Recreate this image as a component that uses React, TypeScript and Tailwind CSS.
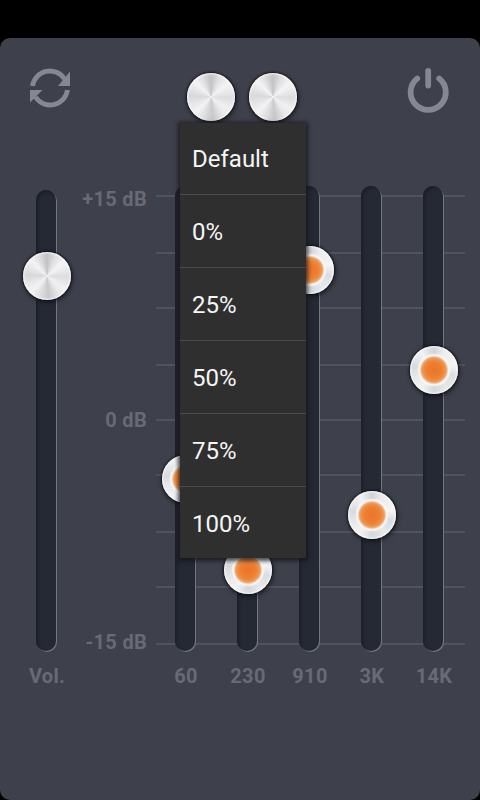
import { useState } from 'react';

const bands = [
  { label: '60', y: 293 },
  { label: '230', y: 384 },
  { label: '910', y: 84 },
  { label: '3K', y: 329 },
  { label: '14K', y: 184 },
];

const presets = ['Default', '0%', '25%', '50%', '75%', '100%'];

// distance of each grid line from the top of the tracks
const gridLines = [9, 66, 121, 178, 233, 288, 345, 400, 457];

function Knob({ lit = false }: { lit?: boolean }) {
  return (
    <div
      className={
        'flex size-12 shrink-0 items-center justify-center rounded-full shadow-[0_0_2px_1px_rgba(12,13,20,0.75),1px_2px_4px_1px_rgba(12,13,20,0.5),inset_0_0_2px_1px_rgba(255,255,255,0.8)] ' +
        (lit
          ? 'bg-[conic-gradient(#d0d2d5,#ececee_28deg,#f4f4f5_75deg,#dadde0_105deg,#e6e8ea_145deg,#d4d8dc_180deg,#f2f2f3_215deg,#e6e8ea_250deg,#d8dadd_280deg,#f2f2f3_325deg,#d0d2d5)]'
          : 'bg-[conic-gradient(#c2c1c4,#dedee0_22deg,#f4f4f5_50deg,#e9e9eb_72deg,#dddcdf_92deg,#f0f0f1_125deg,#e9e9eb_145deg,#c8c7ca_175deg,#dcdbde_197deg,#f3f3f4_225deg,#e6e6e8_250deg,#d8d7db_274deg,#f3f3f4_315deg,#e0e0e2_335deg,#c2c1c4)]')
      }
    >
      {lit && (
        <div className="size-[34px] rounded-full bg-[radial-gradient(circle_closest-side,#ea742c_0%,#ee7f32_45%,#f09245_66%,#eab288_76%,#f3ebe5_83%,#f8f8f8_88%,rgba(255,255,255,0)_100%)]" />
      )}
    </div>
  );
}

function Track({ y, height, lit }: { y: number; height: string; lit?: boolean }) {
  return (
    <div
      className={
        'relative w-5 rounded-full bg-[#252933] shadow-[1px_1px_0_#747680,inset_2px_2px_3px_#1c1f28] ' + height
      }
    >
      <div className="absolute -left-[13px] -mt-6" style={{ top: y }}>
        <Knob lit={lit} />
      </div>
    </div>
  );
}

export default function App() {
  const [selected, setSelected] = useState('Default');

  return (
    <main className="h-[800px] w-[480px] overflow-hidden bg-black pt-[38px] font-['Roboto',sans-serif]">
      <div className="h-[762px] rounded-[10px] bg-[#3e404b]">
        <header className="flex h-[148px] items-start justify-between pr-[30px] pl-[28px]">
          <button type="button" aria-label="Reset" className="mt-[28px]">
            <svg width="44" height="44" viewBox="0 0 44 44" fill="none">
              <path d="M4.5 20A17.5 17.5 0 0 1 36.5 13" stroke="#858791" strokeWidth="4.8" />
              <path d="M42 5.5V20H30Z" fill="#858791" />
              <path d="M39.5 24A17.5 17.5 0 0 1 7.500 31" stroke="#858791" strokeWidth="4.8" />
              <path d="M2 24H14.500L2 36.500Z" fill="#858791" />
            </svg>
          </button>

          <div className="relative mt-[35px] ml-[6px] flex gap-[14px]">
            <Knob />
            <Knob />
            <ul className="absolute top-[50px] left-[-7px] z-10 w-[126px] bg-[#2f2f2f] shadow-[0_1px_4px_2px_rgba(20,20,24,0.75)]">
              {presets.map((preset) => (
                <li key={preset} className="border-b border-[#4b4b4b] first:-mt-px last:-mb-px last:border-b-0">
                  <button
                    type="button"
                    aria-pressed={selected === preset}
                    onClick={() => setSelected(preset)}
                    className="flex h-[72px] w-full items-center px-3 pt-[2px] text-2xl text-[#f5f5f5]"
                  >
                    {preset}
                  </button>
                </li>
              ))}
            </ul>
          </div>

          <button type="button" aria-label="Power" className="mt-[29px]">
            <svg width="44" height="48" viewBox="0 0 44 48" fill="none" stroke="#858791" strokeLinecap="round">
              <path d="M11.2 11.5A17.6 17.6 0 1 0 33.2 11.5" strokeWidth="5.8" />
              <path d="M22.2 4V18.5" strokeWidth="5.8" />
            </svg>
          </button>
        </header>

        <section className="flex text-xl font-bold text-[#686a76]">
          <div className="flex w-[74px] flex-col items-center pt-1 pl-[18px]">
            <Track y={86} height="h-[461px]" />
            <span className="mt-[11px] ml-[2px] leading-[28px] tracking-[0.3px]">Vol.</span>
          </div>

          <div className="flex h-[466px] w-[73px] flex-col items-end justify-between whitespace-nowrap leading-[24px] tracking-[0.3px]">
            <span className="mt-px">+15 dB</span>
            <span className="-mt-[2px]">0 dB</span>
            <span className="-mb-[2px]">-15 dB</span>
          </div>

          <div className="ml-[7px] grid w-[311px]">
            <div className="[grid-area:1/1] h-[466px] pl-[2px]">
              {gridLines.map((y, i) => (
                <div
                  key={y}
                  className="box-border border-b-2 border-[#50525d]"
                  style={{ height: i === 0 ? y + 2 : y - gridLines[i - 1] }}
                />
              ))}
            </div>
            <div className="[grid-area:1/1] grid grid-cols-[repeat(5,62px)]">
              {bands.map((band) => (
                <div key={band.label} className="flex flex-col items-center">
                  <Track y={band.y} height="h-[465px]" lit />
                  <span className="mt-[11px] ml-[2px] leading-[28px] tracking-[0.3px]">{band.label}</span>
                </div>
              ))}
            </div>
          </div>
        </section>
      </div>
    </main>
  );
}
